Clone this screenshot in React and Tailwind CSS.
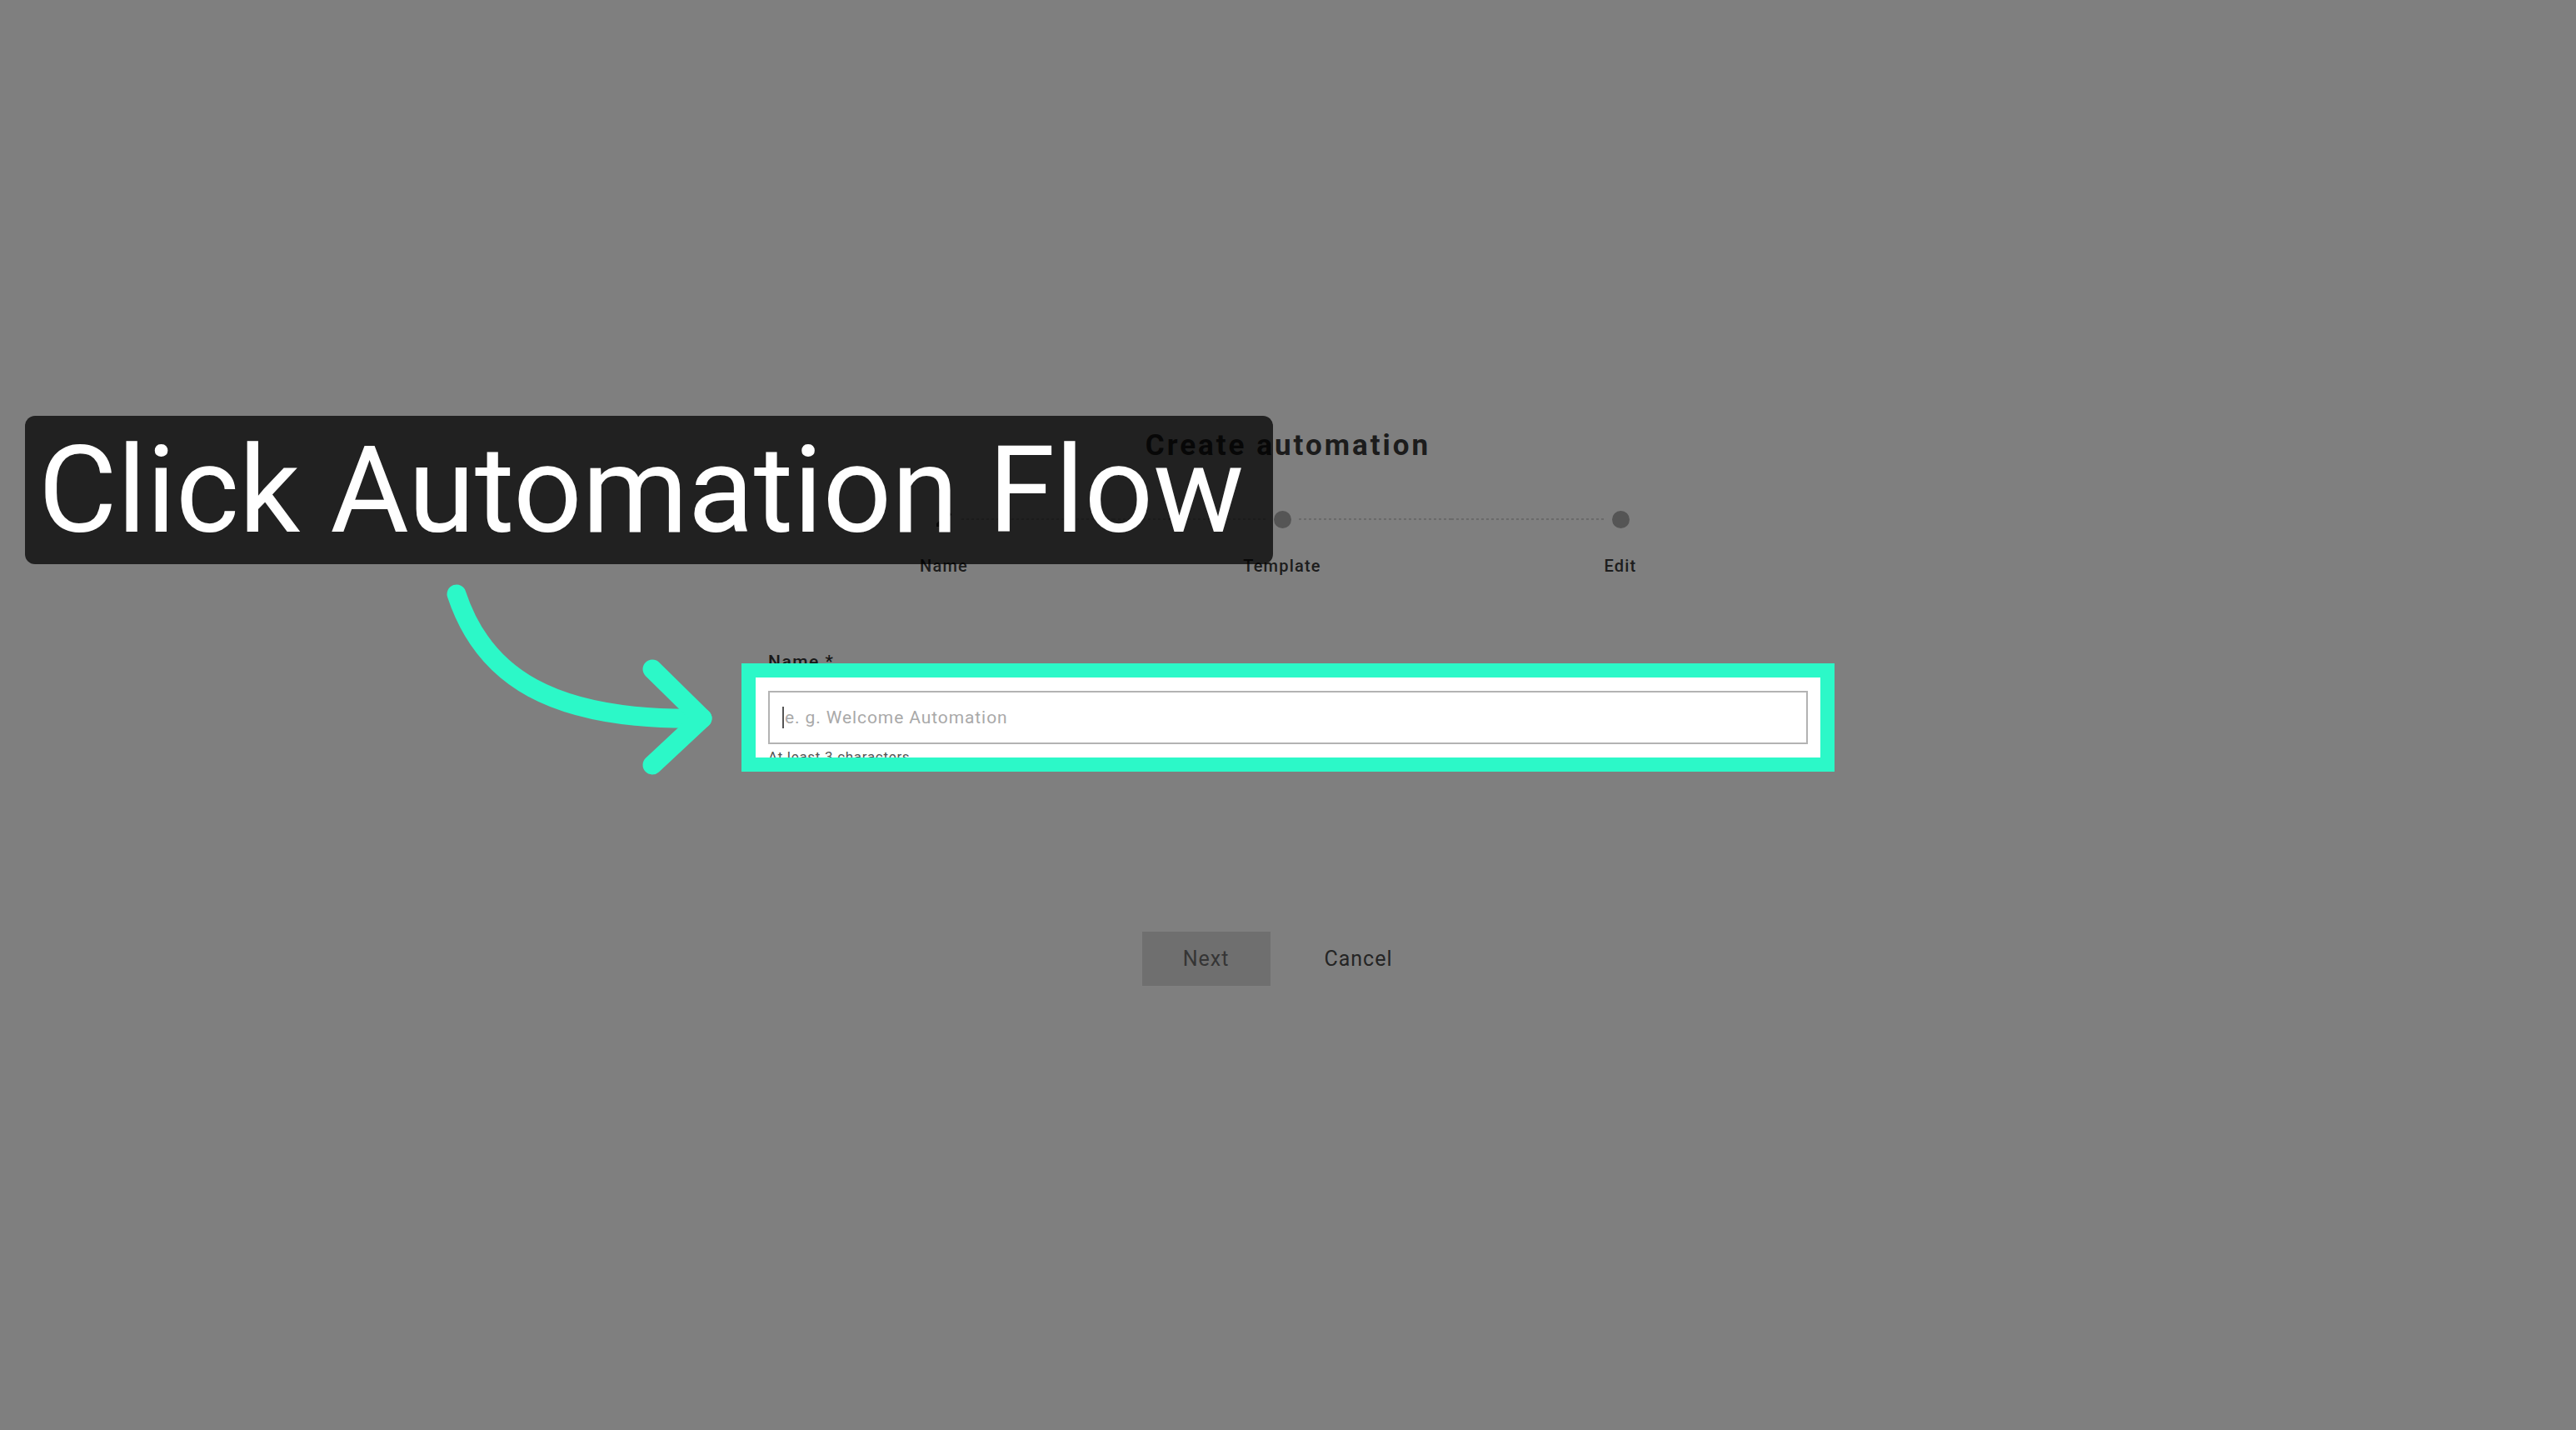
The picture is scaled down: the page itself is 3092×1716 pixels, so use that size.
import React from 'react';

const TEAL = '#2cf8c8';

const Connector = ({ hidden }) => (
    <div
        className={`h-[2px] flex-1 ${hidden ? 'invisible' : 'bg-[repeating-linear-gradient(90deg,#d4d4d4_0_3px,transparent_3px_6px)]'}`}
    />
);

const PencilIcon = () => (
    <svg width="24" height="24" viewBox="0 0 24 24" className="shrink-0">
        <path
            fill="#333333"
            d="M3 17.25V21h3.75L17.81 9.94l-3.75-3.75L3 17.25zM20.71 7.04a.996.996 0 0 0 0-1.41l-2.34-2.34a.996.996 0 0 0-1.41 0l-1.83 1.83 3.75 3.75 1.83-1.83z"
        />
    </svg>
);

const Step = ({ label, first, last, active }) => (
    <div className="flex flex-col items-center">
        <div className="flex h-[24px] w-full items-center gap-[9px]">
            <Connector hidden={first} />
            {active ? <PencilIcon /> : <div className="h-[21px] w-[21px] shrink-0 rounded-full bg-[#aaaaaa]" />}
            <Connector hidden={last} />
        </div>
        <div className="mt-[32px] text-[20px] leading-[24px] font-medium tracking-[1.2px] text-[#3a3a3a]">{label}</div>
    </div>
);

const App = () => {
    return (
        <div className="relative h-[1716px] w-[3092px] overflow-hidden bg-white font-['Roboto',sans-serif]">
            {/* page */}
            <div className="mx-auto flex w-[1248px] flex-col pt-[515px]">
                <h1 className="text-center text-[35px] leading-[40px] font-bold tracking-[3px] text-[#383838]">
                    Create automation
                </h1>

                <div className="mt-[56px] ml-[8px] grid w-[1218px] grid-cols-3">
                    <Step label="Name" first active />
                    <Step label="Template" />
                    <Step label="Edit" last />
                </div>

                <div className="mt-[91px] text-[21px] leading-[24px] font-medium tracking-[1.5px] text-[#333333]">Name *</div>
                <div className="relative mt-[23px]">
                    <input
                        type="text"
                        placeholder="e. g. Welcome Automation"
                        className="h-[64px] w-full border-2 border-[#b3b3b3] bg-white px-[18px] text-[21px] tracking-[0.9px] text-[#333] outline-none placeholder:text-[#a9a9a9]"
                    />
                    <span className="absolute top-[19px] left-[17px] h-[26px] w-[2px] bg-[#555]" />
                </div>
                <div className="mt-[5px] text-[17px] leading-[20px] tracking-[0.7px] text-[#555555]">At least 3 characters</div>

                <div className="mt-[200px] flex justify-center gap-[29px] pr-[14px]">
                    <button className="h-[65px] w-[154px] bg-[#dedede] text-[25px] tracking-[1px] text-[#6b6b6b]">Next</button>
                    <button className="h-[65px] w-[154px] text-[25px] tracking-[1px] text-[#4a4a4a]">Cancel</button>
                </div>
            </div>

            {/* spotlight */}
            <div className="absolute top-[796px] left-[890px] h-[130px] w-[1312px] border-[17px] border-[#2cf8c8] shadow-[0_0_0_4000px_rgba(0,0,0,0.5)]" />

            {/* caption */}
            <div className="absolute top-[499px] left-[30px] flex h-[178px] w-[1498px] items-center rounded-[12px] bg-[rgba(0,0,0,0.74)] pl-[16px]">
                <span className="text-[145px] leading-[178px] whitespace-nowrap text-white">Click Automation Flow</span>
            </div>

            {/* arrow */}
            <svg className="pointer-events-none absolute top-0 left-0" width="3092" height="1716" viewBox="0 0 3092 1716">
                <path
                    d="M548 713 C580 810 660 866 843 862"
                    fill="none"
                    stroke={TEAL}
                    strokeWidth="23"
                    strokeLinecap="round"
                />
                <path
                    d="M783 803 L843 862 L783 918"
                    fill="none"
                    stroke={TEAL}
                    strokeWidth="23"
                    strokeLinecap="round"
                    strokeLinejoin="round"
                />
            </svg>
        </div>
    );
};

export default App;
